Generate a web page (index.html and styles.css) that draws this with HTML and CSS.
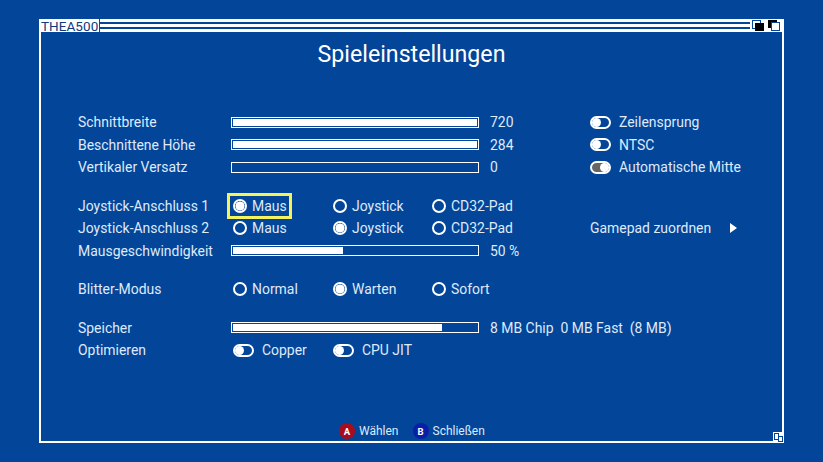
FILE: index.html
```html
<!DOCTYPE html>
<html lang="de">
<head>
<meta charset="utf-8">
<title>Spieleinstellungen</title>
<link rel="stylesheet" href="styles.css">
</head>
<body>
<div class="window">
  <div class="titlebar">
    <span class="wintitle">THEA500</span>
    <span class="stripes"></span>
    <span class="winbtn"><svg width="14" height="13" viewBox="0 0 14 13"><rect x="1.5" y="1.5" width="8" height="8" fill="none" stroke="#034599"/><rect x="4" y="4" width="9" height="8" fill="#000"/></svg></span>
    <span class="winbtn"><svg width="14" height="13" viewBox="0 0 14 13"><rect x="1" y="1" width="9" height="8" fill="#000"/><rect x="4.5" y="3.5" width="8" height="8" fill="#fff" stroke="#034599"/></svg></span>
  </div>
  <div class="content">
    <h1 class="heading">Spieleinstellungen</h1>
    <section class="group g-top">
      <div class="row"><span class="label">Schnittbreite</span><span class="bar"><span class="fill" style="width:100%"></span></span><span class="value">720</span><span class="side"><span class="toggle"></span>Zeilensprung</span></div>
      <div class="row"><span class="label">Beschnittene Höhe</span><span class="bar"><span class="fill" style="width:100%"></span></span><span class="value">284</span><span class="side"><span class="toggle"></span>NTSC</span></div>
      <div class="row"><span class="label">Vertikaler Versatz</span><span class="bar"><span class="fill" style="width:0"></span></span><span class="value">0</span><span class="side"><span class="toggle on"></span>Automatische Mitte</span></div>
    </section>
    <section class="group g-joy">
      <div class="row"><span class="label">Joystick-Anschluss 1</span><span class="opt opt1 focus"><span class="radio sel"></span>Maus</span><span class="opt opt2"><span class="radio"></span>Joystick</span><span class="opt opt3"><span class="radio"></span>CD32-Pad</span></div>
      <div class="row"><span class="label">Joystick-Anschluss 2</span><span class="opt opt1"><span class="radio"></span>Maus</span><span class="opt opt2"><span class="radio sel"></span>Joystick</span><span class="opt opt3"><span class="radio"></span>CD32-Pad</span><span class="side map">Gamepad zuordnen<span class="arrow"></span></span></div>
      <div class="row"><span class="label">Mausgeschwindigkeit</span><span class="bar"><span class="fill" style="width:45%"></span></span><span class="value">50 %</span></div>
    </section>
    <section class="group g-blit">
      <div class="row"><span class="label">Blitter-Modus</span><span class="opt opt1"><span class="radio"></span>Normal</span><span class="opt opt2"><span class="radio sel"></span>Warten</span><span class="opt opt3"><span class="radio"></span>Sofort</span></div>
    </section>
    <section class="group g-mem">
      <div class="row"><span class="label">Speicher</span><span class="bar"><span class="fill" style="width:85.5%"></span></span><span class="value">8 MB Chip&nbsp; 0 MB Fast&nbsp; (8 MB)</span></div>
      <div class="row"><span class="label">Optimieren</span><span class="opt opt1"><span class="toggle"></span>Copper</span><span class="opt opt2 jit"><span class="toggle"></span>CPU JIT</span></div>
    </section>
  </div>
  <div class="hints">
    <span class="hint"><span class="pad pad-a">A</span>Wählen</span>
    <span class="hint"><span class="pad pad-b">B</span>Schließen</span>
  </div>
  <span class="resize"><svg width="11" height="11" viewBox="0 0 11 11"><rect x="1.5" y="1.5" width="4" height="6" fill="none" stroke="#034599"/><rect x="5.5" y="4.5" width="4" height="5" fill="#fff" stroke="#034599"/></svg></span>
</div>
</body>
</html>
```
FILE: styles.css
```css
*, *::before { box-sizing: border-box; }
html, body { margin: 0; height: 100%; }
body {
  background: #034599;
  padding: 19px 39px;
  font-family: Roboto, "Liberation Sans", sans-serif;
  color: #dfeafa;
  overflow: hidden;
}
.window {
  position: relative;
  width: 745px;
  height: 424px;
  border: solid #fff;
  border-width: 0 2px 2px 2px;
  display: flex;
  flex-direction: column;
}
.titlebar {
  height: 13px;
  display: flex;
  background: #fff;
  flex: none;
}
.wintitle {
  font-size: 13.5px;
  line-height: 14px;
  color: #0d3a80;
  letter-spacing: 0.05px;
  width: 58px;
  background: #fff;
}
.stripes {
  flex: 1;
  border-left: 1px solid #034599;
  background: linear-gradient(#fff 0 3px, #034599 3px 5px, #fff 5px 8px, #034599 8px 10px, #fff 10px 13px);
}
.winbtn {
  width: 16px;
  height: 13px;
  display: flex;
  align-items: center;
  justify-content: center;
  background: #fff;
}
.content { flex: 1; padding: 0 0 0 37px; }
.heading {
  margin: 0 0 0 -37px;
  padding-top: 9px;
  font-size: 23.2px;
  line-height: 27px;
  font-weight: 400;
  color: #fff;
  text-align: center;
}
.group { display: flex; flex-direction: column; }
.g-top { margin-top: 43px; }
.g-joy { margin-top: 16px; }
.g-blit { margin-top: 16px; }
.g-mem { margin-top: 16px; }
.row {
  display: flex;
  align-items: center;
  height: 22.5px;
  font-size: 13.95px;
  white-space: nowrap;
}
.label { width: 153px; flex: none; }
.bar {
  width: 248px;
  height: 11px;
  border: 1px solid #fff;
  padding: 1px;
  flex: none;
  display: block;
}
.fill { display: block; height: 100%; background: #fff; }
.value { margin-left: 11px; width: 100px; flex: none; }
.side { position: absolute; left: 549px; display: flex; align-items: center; }
.toggle {
  width: 21px;
  height: 13px;
  border: 2px solid #fff;
  border-radius: 7px;
  margin-right: 8px;
  display: flex;
  align-items: center;
  background: #034599;
}
.toggle::before {
  content: "";
  width: 9px;
  height: 9px;
  border-radius: 50%;
  background: #fff;
}
.toggle.on { background: #666; justify-content: flex-end; }
.opt { display: flex; align-items: center; flex: none; }
.opt1 { width: 100px; margin-left: 2px; }
.opt2 { width: 99px; }
.opt3 { width: 110px; }
.jit { width: 100px; }
.radio {
  width: 14px;
  height: 14px;
  border: 2px solid #fff;
  border-radius: 50%;
  margin-right: 5px;
  flex: none;
}
.radio.sel { background: radial-gradient(circle, #fff 0 4.2px, #034599 4.8px); }
.focus { position: relative; }
.focus::before {
  content: "";
  position: absolute;
  left: -6px;
  top: -5px;
  width: 65px;
  height: 26px;
  border: 3px solid #f4f35e;
}
.map { gap: 19px; }
.arrow {
  width: 0;
  height: 0;
  border-left: 7px solid #fff;
  border-top: 5px solid transparent;
  border-bottom: 5px solid transparent;
}
.hints {
  position: absolute;
  left: 298px;
  top: 404px;
  display: flex;
  gap: 14px;
  font-size: 12px;
}
.hint { display: flex; align-items: center; gap: 4px; }
.pad {
  width: 16px;
  height: 16px;
  border-radius: 50%;
  font-size: 9.5px;
  font-weight: 700;
  color: #fff;
  display: flex;
  align-items: center;
  justify-content: center;
}
.pad-a { background: #a80d1e; }
.pad-b { background: #0a1fa8; }
.resize {
  position: absolute;
  right: -2px;
  bottom: -2px;
  width: 11px;
  height: 11px;
  background: #fff;
  display: block;
}
.resize svg { display: block; }
```
